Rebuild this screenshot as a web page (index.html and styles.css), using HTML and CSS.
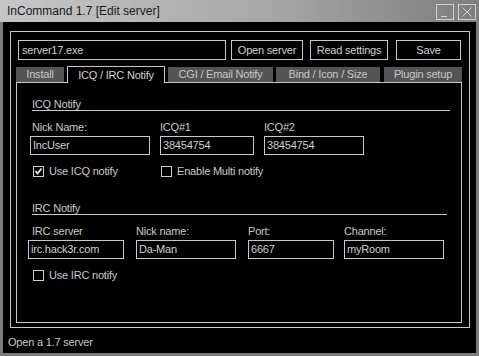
FILE: index.html
```
<!DOCTYPE html>
<html lang="en">
<head>
    <meta charset="UTF-8">
    <title>InCommand 1.7 [Edit server]</title>
    <link rel="stylesheet" href="styles.css">
</head>
<body>
    <div class="window">
        <div class="titlebar">
            <span class="title">InCommand 1.7 [Edit server]</span>
            <span class="tb-btn">
                <svg width="18" height="16" viewBox="0 0 18 16"><rect x="0.5" y="0.5" width="17" height="15" fill="none" stroke="#d0d0d0"/><line x1="5" y1="12.5" x2="11" y2="12.5" stroke="#d0d0d0"/></svg>
            </span>
            <span class="tb-btn close">
                <svg width="18" height="16" viewBox="0 0 18 16"><rect x="0.5" y="0.5" width="17" height="15" fill="none" stroke="#d0d0d0"/><path d="M4.5 3.5 L13.5 12.5 M13.5 3.5 L4.5 12.5" stroke="#d0d0d0" fill="none"/></svg>
            </span>
        </div>

        <div class="client">
            <div class="frame">
                <div class="toolbar">
                    <div class="file-input">server17.exe</div>
                    <div class="btn btn-open">Open server</div>
                    <div class="btn btn-read">Read settings</div>
                    <div class="btn btn-save">Save</div>
                </div>

                <div class="tabs">
                    <div class="tab tab-install">Install</div>
                    <div class="tab tab-active">ICQ / IRC Notify</div>
                    <div class="tab tab-cgi">CGI / Email Notify</div>
                    <div class="tab tab-bind">Bind / Icon / Size</div>
                    <div class="tab tab-plugin">Plugin setup</div>
                </div>

                <div class="panel">
                    <div class="group group-icq">
                        <div class="group-title">ICQ Notify</div>
                        <div class="fields">
                            <div class="field f-nick">
                                <div class="label">Nick Name:</div>
                                <div class="input">IncUser</div>
                            </div>
                            <div class="field f-icq1">
                                <div class="label">ICQ#1</div>
                                <div class="input">38454754</div>
                            </div>
                            <div class="field f-icq2">
                                <div class="label">ICQ#2</div>
                                <div class="input">38454754</div>
                            </div>
                        </div>
                        <div class="checks">
                            <div class="check check-first">
                                <svg class="box" width="11" height="11" viewBox="0 0 11 11"><rect x="0.5" y="0.5" width="10" height="10" fill="none" stroke="#d0d0d0"/><path d="M2.5 5 L4.5 7.5 L8.5 2.5" stroke="#e0e0e0" stroke-width="2" fill="none"/></svg>
                                <span>Use ICQ notify</span>
                            </div>
                            <div class="check">
                                <svg class="box" width="11" height="11" viewBox="0 0 11 11"><rect x="0.5" y="0.5" width="10" height="10" fill="none" stroke="#d0d0d0"/></svg>
                                <span>Enable Multi notify</span>
                            </div>
                        </div>
                    </div>

                    <div class="group group-irc">
                        <div class="group-title">IRC Notify</div>
                        <div class="fields">
                            <div class="field f-server">
                                <div class="label">IRC server</div>
                                <div class="input">irc.hack3r.com</div>
                            </div>
                            <div class="field f-ircnick">
                                <div class="label">Nick name:</div>
                                <div class="input">Da-Man</div>
                            </div>
                            <div class="field f-port">
                                <div class="label">Port:</div>
                                <div class="input">6667</div>
                            </div>
                            <div class="field f-channel">
                                <div class="label">Channel:</div>
                                <div class="input">myRoom</div>
                            </div>
                        </div>
                        <div class="checks">
                            <div class="check">
                                <svg class="box" width="11" height="11" viewBox="0 0 11 11"><rect x="0.5" y="0.5" width="10" height="10" fill="none" stroke="#d0d0d0"/></svg>
                                <span>Use IRC notify</span>
                            </div>
                        </div>
                    </div>
                </div>
            </div>

            <div class="status">Open a 1.7 server</div>
        </div>
    </div>
</body>
</html>
```

FILE: styles.css
```
* {
    box-sizing: border-box;
}
body {
    margin: 0;
    background-color: #000;
    font-family: "Liberation Sans", Arial, sans-serif;
    font-size: 11px;
    letter-spacing: -0.2px;
    color: #cacaca;
}
.window {
    width: 479px;
    height: 356px;
    background-color: #7c7c7c;
    display: flex;
    flex-direction: column;
}
.titlebar {
    height: 22px;
    display: flex;
    align-items: flex-start;
    padding: 4px 3px 0 7px;
    background: linear-gradient(to right, #c6c6c6, #a8a8a8 55%, #7e7e7e);
}
.title {
    flex: 1;
    font-size: 12px;
    line-height: 15px;
    letter-spacing: 0;
    color: #1a1a1a;
}
.tb-btn {
    width: 18px;
    height: 16px;
    display: block;
}
.tb-btn svg {
    display: block;
}
.tb-btn.close {
    margin-left: 4px;
}
.client {
    flex: 1;
    margin: 0 3px 3px 3px;
    background-color: #000;
    display: flex;
    flex-direction: column;
}
.frame {
    margin: 9px 0 0 7px;
    width: 460px;
    height: 297px;
    border: 1px solid #c8c8c8;
}
.toolbar {
    display: flex;
    margin-top: 8px;
    padding-left: 7px;
    height: 20px;
}
.file-input, .btn, .input {
    border: 1px solid #c8c8c8;
    background-color: #000;
    color: #d0d0d0;
    white-space: nowrap;
}
.file-input {
    width: 208px;
    padding-left: 3px;
    line-height: 18px;
}
.btn {
    text-align: center;
    line-height: 18px;
}
.btn-open {
    width: 72px;
    margin-left: 5px;
}
.btn-read {
    width: 78px;
    margin-left: 7px;
}
.btn-save {
    width: 65px;
    margin-left: 8px;
}
.tabs {
    display: flex;
    align-items: flex-end;
    margin-top: 6px;
    padding-left: 5px;
    height: 16px;
}
.tab {
    height: 15px;
    background-color: #545454;
    color: #c8c8c8;
    text-align: center;
    line-height: 15px;
    white-space: nowrap;
}
.tab-install {
    width: 48px;
}
.tab-active {
    width: 98px;
    height: 17px;
    margin: 0 3px -1px 3px;
    background-color: #000;
    border: 1px solid #c8c8c8;
    border-bottom: none;
    line-height: 16px;
    color: #d0d0d0;
    position: relative;
    z-index: 1;
}
.tab-cgi {
    width: 105px;
}
.tab-bind {
    width: 104px;
    margin-left: 3px;
}
.tab-plugin {
    width: 78px;
    margin-left: 4px;
}
.panel {
    margin-left: 5px;
    width: 446px;
    height: 241px;
    border: 1px solid #c8c8c8;
}
.group {
    padding: 0 11px 0 15px;
}
.group-irc {
    padding-right: 14px;
}
.group-title {
    margin-top: 15px;
    line-height: 12px;
    border-bottom: 1px solid #c8c8c8;
}
.group-irc .group-title {
    margin-top: 24px;
}
.fields {
    display: flex;
    margin-left: -2px;
}
.field {
    display: flex;
    flex-direction: column;
}
.label {
    margin-top: 10px;
    margin-bottom: 3px;
    line-height: 12px;
    white-space: nowrap;
}
.input {
    height: 19px;
    line-height: 17px;
    padding-left: 2px;
}
.f-nick .label {
    padding-left: 2px;
}
.f-nick {
    width: 120px;
}
.f-icq1 {
    width: 94px;
    margin-left: 10px;
}
.f-icq2 {
    width: 100px;
    margin-left: 10px;
}
.group-irc .fields {
    margin-left: -4px;
}
.f-server {
    width: 96px;
}
.f-server .label {
    padding-left: 4px;
}
.f-ircnick {
    width: 100px;
    margin-left: 12px;
}
.f-port {
    width: 86px;
    margin-left: 12px;
}
.f-channel {
    width: 100px;
    margin-left: 10px;
}
.checks {
    display: flex;
    margin-top: 9px;
    margin-left: 1px;
    height: 14px;
}
.check {
    display: flex;
    align-items: center;
    gap: 5px;
    line-height: 14px;
    white-space: nowrap;
}
.check-first {
    width: 128px;
}
.box {
    display: block;
    flex-shrink: 0;
}
.status {
    margin-top: 8px;
    padding-left: 5px;
    line-height: 13px;
}
```
